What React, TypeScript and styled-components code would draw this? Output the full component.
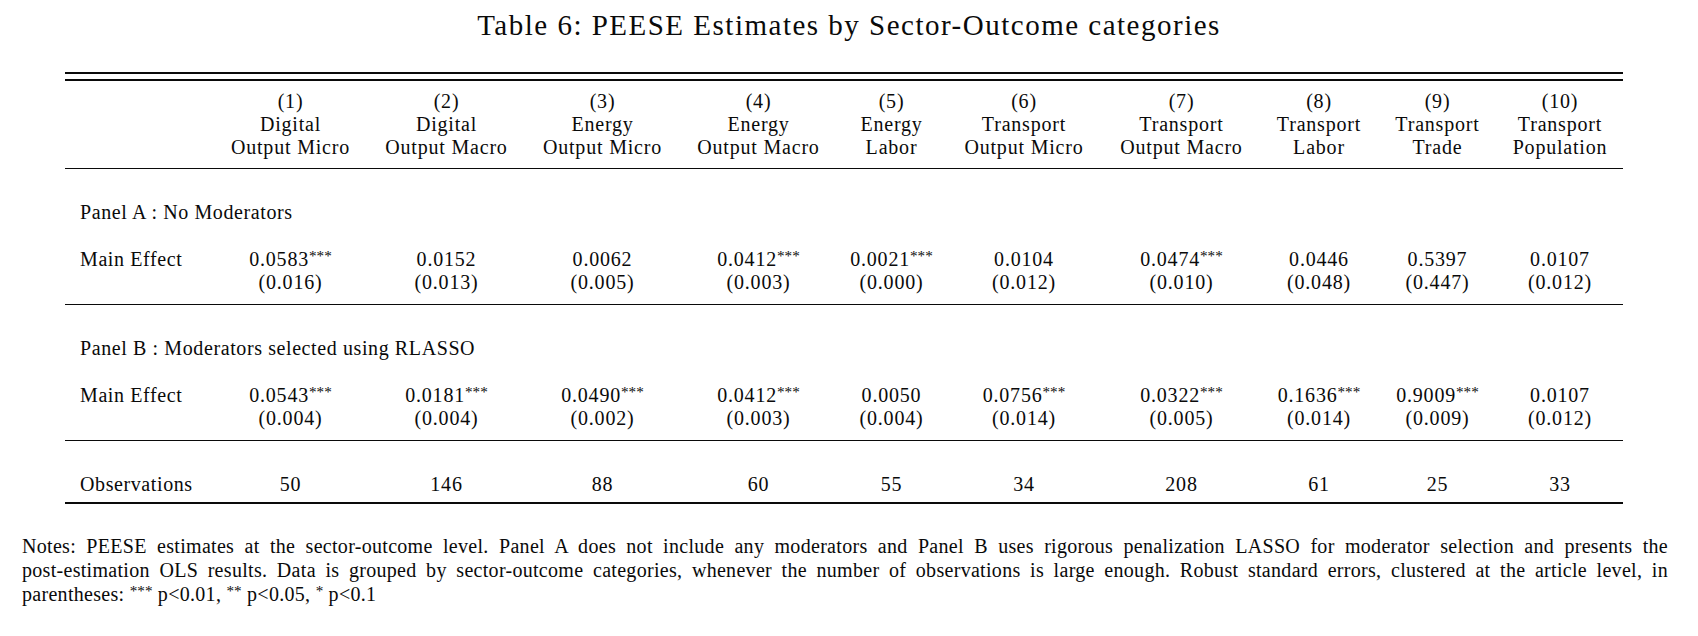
import React from 'react'
import styled, { createGlobalStyle } from 'styled-components'

const GlobalStyle = createGlobalStyle`
  html, body {
    margin: 0;
    padding: 0;
    background: #fff;
  }
  body {
    font-family: 'Liberation Serif', 'Times New Roman', serif;
    color: #0a0a0a;
  }
`

const COLUMNS =
  '149px 153px 159px 153px 159px 107px 158px 157px 118px 119px 126px'

const Page = styled.div`
  width: 1698px;
  height: 636px;
  overflow: hidden;
`

const Title = styled.h1`
  margin: 0;
  padding-top: 9px;
  font-weight: normal;
  font-size: 29px;
  line-height: 32px;
  letter-spacing: 1.5px;
  text-align: center;
`

const Table = styled.div`
  width: 1558px;
  margin: 31px 0 0 65px;
  font-size: 20px;
  line-height: 23px;
  letter-spacing: 0.8px;
`

const DoubleRule = styled.div`
  height: 5px;
  border-top: 2px solid #0a0a0a;
  border-bottom: 2px solid #0a0a0a;
`

const Rule = styled.div<{ $thick?: boolean }>`
  height: ${({ $thick }) => ($thick ? '2px' : '1px')};
  background: #0a0a0a;
`

const Grid = styled.div`
  display: grid;
  grid-template-columns: ${COLUMNS};
`

const HeadRow = styled(Grid)`
  padding: 9px 0 9px;
`

const Section = styled.div<{ $top: number; $bottom: number }>`
  padding-top: ${({ $top }) => $top}px;
  padding-bottom: ${({ $bottom }) => $bottom}px;
`

const PanelTitle = styled.div`
  padding-left: 15px;
  margin-bottom: 24px;
  letter-spacing: 0.6px;
`

const Label = styled.div`
  padding-left: 15px;
  white-space: nowrap;
  letter-spacing: 0.6px;
`

const Cell = styled.div`
  display: flex;
  flex-direction: column;
  align-items: center;
  white-space: nowrap;
`

const Stars = styled.span`
  position: relative;
  top: -0.32em;
  font-size: 0.76em;
  line-height: 0;
  letter-spacing: 0;
`

const Notes = styled.div`
  width: 1646px;
  margin: 30px 0 0 22px;
  font-size: 20px;
  line-height: 24px;
  letter-spacing: 0.3px;
`

const NoteLine = styled.div<{ $full?: boolean }>`
  white-space: nowrap;
  text-align: ${({ $full }) => ($full ? 'justify' : 'left')};
  text-align-last: ${({ $full }) => ($full ? 'justify' : 'left')};
`

const headers = [
  ['Digital', 'Output Micro'],
  ['Digital', 'Output Macro'],
  ['Energy', 'Output Micro'],
  ['Energy', 'Output Macro'],
  ['Energy', 'Labor'],
  ['Transport', 'Output Micro'],
  ['Transport', 'Output Macro'],
  ['Transport', 'Labor'],
  ['Transport', 'Trade'],
  ['Transport', 'Population'],
]

type Estimate = [string, boolean, string]

const panels: { title: string; rows: Estimate[] }[] = [
  {
    title: 'Panel A : No Moderators',
    rows: [
      ['0.0583', true, '0.016'],
      ['0.0152', false, '0.013'],
      ['0.0062', false, '0.005'],
      ['0.0412', true, '0.003'],
      ['0.0021', true, '0.000'],
      ['0.0104', false, '0.012'],
      ['0.0474', true, '0.010'],
      ['0.0446', false, '0.048'],
      ['0.5397', false, '0.447'],
      ['0.0107', false, '0.012'],
    ],
  },
  {
    title: 'Panel B : Moderators selected using RLASSO',
    rows: [
      ['0.0543', true, '0.004'],
      ['0.0181', true, '0.004'],
      ['0.0490', true, '0.002'],
      ['0.0412', true, '0.003'],
      ['0.0050', false, '0.004'],
      ['0.0756', true, '0.014'],
      ['0.0322', true, '0.005'],
      ['0.1636', true, '0.014'],
      ['0.9009', true, '0.009'],
      ['0.0107', false, '0.012'],
    ],
  },
]

const observations = [50, 146, 88, 60, 55, 34, 208, 61, 25, 33]

const App = () => {
  return (
    <Page>
      <GlobalStyle />
      <Title>Table 6: PEESE Estimates by Sector-Outcome categories</Title>
      <Table>
        <DoubleRule />
        <HeadRow>
          <div />
          {headers.map(([sector, outcome], i) => (
            <Cell key={i}>
              <span>({i + 1})</span>
              <span>{sector}</span>
              <span>{outcome}</span>
            </Cell>
          ))}
        </HeadRow>
        <Rule />
        {panels.map((panel) => (
          <React.Fragment key={panel.title}>
            <Section $top={32} $bottom={10}>
              <PanelTitle>{panel.title}</PanelTitle>
              <Grid>
                <Label>Main Effect</Label>
                {panel.rows.map(([coef, sig, se], i) => (
                  <Cell key={i}>
                    <span>
                      {coef}
                      {sig && <Stars>***</Stars>}
                    </span>
                    <span>({se})</span>
                  </Cell>
                ))}
              </Grid>
            </Section>
            <Rule />
          </React.Fragment>
        ))}
        <Section $top={32} $bottom={6}>
          <Grid>
            <Label>Observations</Label>
            {observations.map((n, i) => (
              <Cell key={i}>{n}</Cell>
            ))}
          </Grid>
        </Section>
        <Rule $thick />
      </Table>
      <Notes>
        <NoteLine $full>
          Notes: PEESE estimates at the sector-outcome level. Panel A does not
          include any moderators and Panel B uses rigorous penalization LASSO
          for moderator selection and presents the
        </NoteLine>
        <NoteLine $full>
          post-estimation OLS results. Data is grouped by sector-outcome
          categories, whenever the number of observations is large enough.
          Robust standard errors, clustered at the article level, in
        </NoteLine>
        <NoteLine>
          parentheses: <Stars>***</Stars> p&lt;0.01, <Stars>**</Stars>{' '}
          p&lt;0.05, <Stars>*</Stars> p&lt;0.1
        </NoteLine>
      </Notes>
    </Page>
  )
}

export default App
